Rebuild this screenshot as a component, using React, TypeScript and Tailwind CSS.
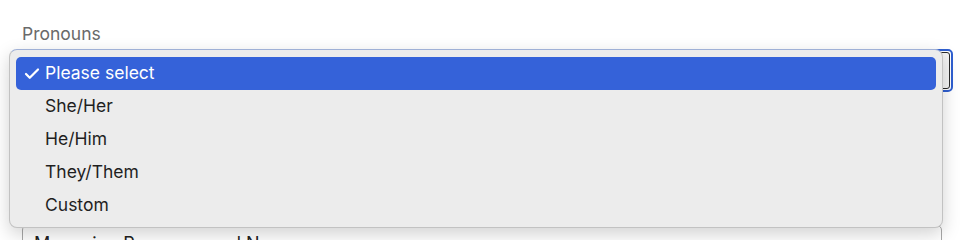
import { Check } from "lucide-react";

const options = ["Please select", "She/Her", "He/Him", "They/Them", "Custom"];

export default function App() {
  const selected = 0;

  return (
    <div className="relative w-[964px] h-[240px] overflow-hidden bg-white" style={{ fontFamily: "Inter, 'Noto Sans', sans-serif" }}>
      <div className="pl-[22px] pr-[11px] pt-[24px]">
        <label className="block text-[17.5px] leading-[20px] text-[#6a6a6a]">Pronouns</label>

        {/* the closed select underneath, still focused */}
        <div className="mt-[5px] h-[43px] rounded-[5px] border-2 border-[#2f5fd0] p-px">
          <div className="h-full rounded-[3px] border border-[#2b2b2b] bg-[#f4f4f4]" />
        </div>

        {/* next field, mostly under the open menu */}
        <div className="mt-[133px] mr-[11px] h-[40px] rounded-t-[5px] border border-[#a8a8a8] px-[11px] pt-[6px] text-[18px] leading-[24px] text-[#222]">
          Managing Pronouns and Names
        </div>
      </div>

      {/* native popup menu */}
      <div className="absolute left-[9px] top-[49px] w-[934px] rounded-[8px] border border-[#c2c2c2] border-t-[#9fb0d6] bg-[#ececec] px-[6px] pt-[7px] pb-[5px] shadow-[0_6px_18px_rgba(0,0,0,0.18)]">
        {options.map((o, i) => (
          <div
            key={o}
            className={`flex h-[33px] items-center rounded-[5px] text-[17.5px] ${i === selected ? "bg-[#3562d9] text-white" : "text-[#1f1f1f]"}`}
          >
            <span className="flex w-[29px] justify-start pl-[7px]">
              {i === selected && <Check className="h-[18px] w-[18px]" strokeWidth={3} />}
            </span>
            <span>{o}</span>
          </div>
        ))}
      </div>
    </div>
  );
}
